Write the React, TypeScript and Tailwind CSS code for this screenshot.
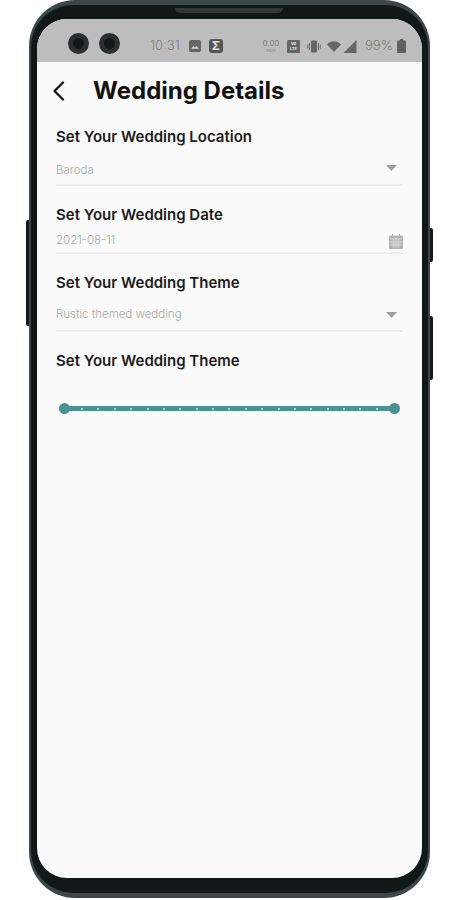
import React from "react";

const Label = ({ children, h }: { children: React.ReactNode; h: string }) => (
  <div className={`${h} flex items-center pb-[2px] text-[15px] font-semibold leading-none text-[#1c1c1c]`}>{children}</div>
);

const Caret = ({ c = "" }: { c?: string }) => (
  <svg width="11" height="6" viewBox="0 0 11 6" className={`${c} mr-[6px] shrink-0`}><path d="M0 0h11L5.500 6z" fill="#9e9e9e" /></svg>
);

const Calendar = () => (
  <svg width="14" height="15" viewBox="0 0 14 15" className="shrink-0">
    <path d="M3 0h1v2H3zM10 0h1v2h-1z" fill="#aaa" />
    <path d="M1 1.500h12a1 1 0 0 1 1 1V14a1 1 0 0 1-1 1H1a1 1 0 0 1-1-1V2.500a1 1 0 0 1 1-1z" fill="#b4b4b4" />
    <path d="M1.500 5h11M1.500 8h11M1.500 11h11M4.500 5v8.500M7 5v8.500M9.500 5v8.500" stroke="#e4e4e4" strokeWidth=".8" />
  </svg>
);

const Field = ({ text, icon, h }: { text: string; icon: React.ReactNode; h: string }) => (
  <div className={`${h} flex items-center justify-between border-b-2 border-[#ececec] text-[11.5px] font-light text-[#a8a8a8]`}>
    <span>{text}</span>
    {icon}
  </div>
);

export default function App() {
  return (
    <div className="relative h-[900px] w-[460px] overflow-hidden bg-white font-['Inter','Noto_Sans',sans-serif]">
      <div className="absolute left-[26px] top-[220px] h-[106px] w-[5px] rounded-l-[2px] bg-[#14191a]" />
      <div className="absolute left-[428px] top-[228px] h-[34px] w-[5px] rounded-r-[2px] bg-[#14191a]" />
      <div className="absolute left-[428px] top-[316px] h-[64px] w-[5px] rounded-r-[2px] bg-[#14191a]" />

      <div className="relative ml-[29px] h-[898px] w-[401px] rounded-[46px] bg-[#3d474a] px-[2px] py-[5px]">
        <div className="absolute left-[146px] top-[8px] h-[5px] w-[108px] rounded-b-[5px] bg-[#30383a]" />
        <div className="h-full w-full rounded-[42px] bg-[#121718] px-[6px] pb-[15px] pt-[14px]">
          <div className="flex h-full w-full flex-col overflow-hidden rounded-[30px] bg-[#fafafa]">
            <div className="flex h-[43px] shrink-0 items-center bg-[#bdbdbd] pl-[31px] pt-[5px] text-[#7d7d7d]">
              <div className="h-[21px] w-[21px] rounded-full border-[5px] border-[#2b2f30] bg-[#141718]" />
              <div className="ml-[10px] h-[21px] w-[21px] rounded-full border-[5px] border-[#2b2f30] bg-[#141718]" />
              <div className="mt-[6px] flex items-center">
                <span className="ml-[30px] w-[31px] text-[13px] font-light">10:31</span>
                <svg width="12" height="12" viewBox="0 0 11 11" className="ml-[8px]"><rect width="11" height="11" rx="1.500" fill="#666" /><path d="M2 8l2-2.500 1.500 1.500 1.500-1.500 2 2.500z" fill="#ddd" /></svg>
                <div className="ml-[8px] flex h-[14px] w-[14px] items-center justify-center rounded-[3px] bg-[#555] text-[12px] font-bold leading-none text-[#ddd]">Σ</div>
                <div className="ml-[39px] flex w-[18px] flex-col items-center">
                  <span className="h-[9px] text-[8px] leading-[9px]">0.00</span>
                  <span className="h-[5px] text-[4px] leading-[5px]">KB/S</span>
                </div>
                <div className="ml-[7px] flex h-[13px] w-[13px] flex-col items-center justify-center rounded-[1px] bg-[#666] text-[4px] font-bold leading-[5px] text-[#e5e5e5]">
                  <span>Vo</span>
                  <span>LTE</span>
                </div>
                <svg width="14" height="13" viewBox="0 0 14 13" className="ml-[7px]"><rect x="4" y="0.500" width="6" height="12" rx="1" fill="#666" /><path d="M2.500 3v7M0.700 4.500v4M11.500 3v7M13.300 4.500v4" stroke="#666" strokeWidth="1" /></svg>
                <svg width="14" height="11" viewBox="0 0 14 11" className="ml-[6px]"><path d="M0 3.500C4-.7 10-.7 14 3.500L7 11z" fill="#666" /></svg>
                <svg width="14" height="13" viewBox="0 0 13 13" className="ml-[2px]"><path d="M13 0v13H0z" fill="#666" /></svg>
                <span className="ml-[8px] w-[28px] text-[13px] font-light">99%</span>
                <svg width="9" height="14" viewBox="0 0 9 14" className="ml-[4px]"><path d="M3 0h3v1.500h2a1 1 0 0 1 1 1V13a1 1 0 0 1-1 1H1a1 1 0 0 1-1-1V2.500a1 1 0 0 1 1-1h2z" fill="#616161" /></svg>
              </div>
            </div>

            <div className="flex h-[57px] shrink-0 items-center pl-[15px]">
              <svg width="14" height="20" viewBox="0 0 14 20" fill="none" stroke="#111" strokeWidth="2.200" strokeLinecap="round" strokeLinejoin="round"><path d="M11 1.500L2.500 10 11 18.500" /></svg>
              <h1 className="ml-[27px] text-[24px] font-bold leading-none text-[#111]">Wedding Details</h1>
            </div>

            <div className="flex flex-col px-[19px]">
              <Label h="h-[36px]">Set Your Wedding Location</Label>
              <Field h="h-[31px] pt-[2px]" text="Baroda" icon={<Caret c="mb-[5px]" />} />
              <Label h="h-[26px] mt-[16px]">Set Your Wedding Date</Label>
              <Field h="h-[26px] pt-[2px]" text="2021-08-11" icon={<Calendar />} />
              <Label h="h-[26px] mt-[16px]">Set Your Wedding Theme</Label>
              <Field h="h-[36px] pt-[4px]" text="Rustic themed wedding" icon={<Caret />} />
              <Label h="h-[26px] mt-[16px]">Set Your Wedding Theme</Label>
              <div className="mt-[29px] flex h-[11px] items-center px-[4px]">
                <div className="relative flex h-[5px] w-full items-center justify-between bg-[#4a9296] px-[21px]">
                  <div className="absolute left-[-1px] top-[-3px] h-[11px] w-[11px] rounded-full bg-[#4a9296]" />
                  <div className="absolute right-[-1px] top-[-3px] h-[11px] w-[11px] rounded-full bg-[#4a9296]" />
                  {Array.from({ length: 19 }).map((_, i) => (
                    <span key={i} className="h-[2px] w-[2px] rounded-full bg-[#d8ecec]" />
                  ))}
                </div>
              </div>
            </div>
          </div>
        </div>
      </div>
    </div>
  );
}
